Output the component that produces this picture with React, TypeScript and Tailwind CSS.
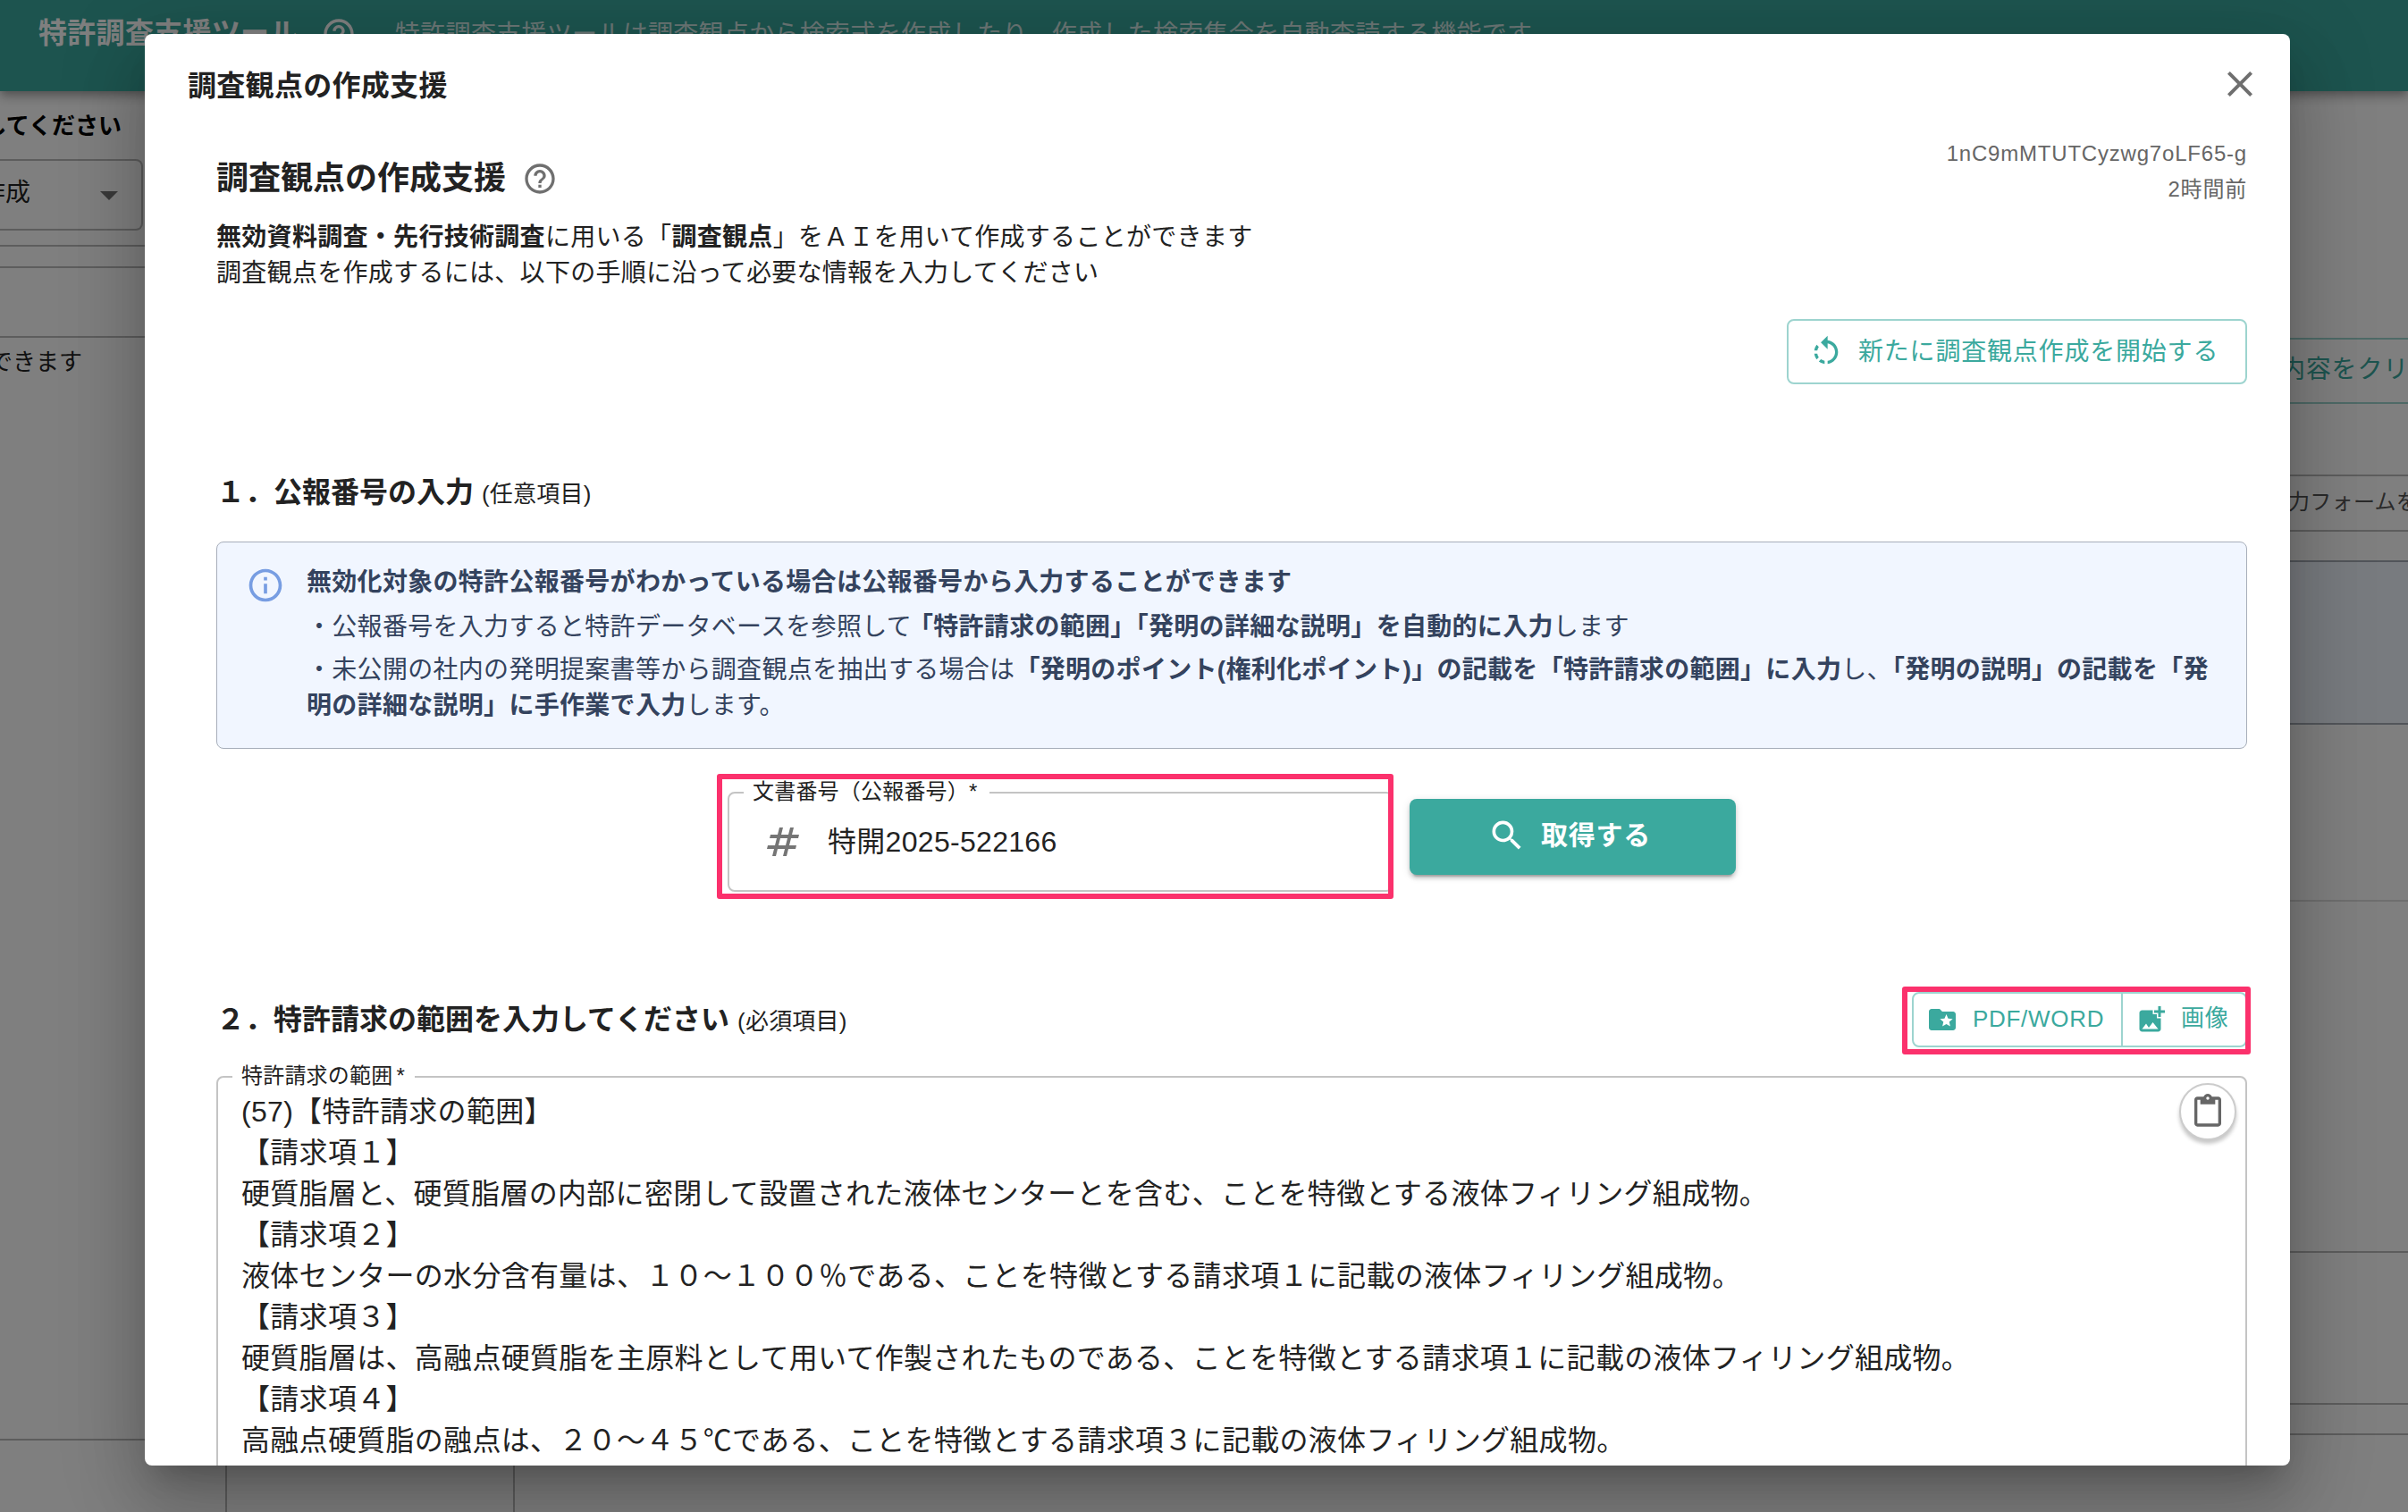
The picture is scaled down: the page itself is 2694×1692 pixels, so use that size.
import {
  MdAddPhotoAlternate,
  MdArrowDropDown,
  MdClose,
  MdContentPaste,
  MdFolderSpecial,
  MdHelpOutline,
  MdInfoOutline,
  MdNumbers,
  MdRotateLeft,
  MdSearch,
} from "react-icons/md";

const claims = [
  "(57)【特許請求の範囲】",
  "【請求項１】",
  "硬質脂層と、硬質脂層の内部に密閉して設置された液体センターとを含む、ことを特徴とする液体フィリング組成物。",
  "【請求項２】",
  "液体センターの水分含有量は、１０～１００％である、ことを特徴とする請求項１に記載の液体フィリング組成物。",
  "【請求項３】",
  "硬質脂層は、高融点硬質脂を主原料として用いて作製されたものである、ことを特徴とする請求項１に記載の液体フィリング組成物。",
  "【請求項４】",
  "高融点硬質脂の融点は、２０～４５℃である、ことを特徴とする請求項３に記載の液体フィリング組成物。",
];

function SearchPage() {
  return (
    <div className="flex h-full flex-col bg-white text-[#222]">
      <header className="z-10 flex h-[102px] shrink-0 items-start bg-[#3ba99e] pl-[43px] pt-[14px] text-white shadow-[0_4px_8px_-2px_rgba(0,0,0,0.2),0_8px_10px_rgba(0,0,0,0.14),0_2px_20px_rgba(0,0,0,0.12)]">
        <h1 className="w-[316px] text-[32px] font-bold leading-[46px] tracking-[0.3px]">特許調査支援ツール</h1>
        <MdHelpOutline className="mt-[4px] h-[40px] w-[40px]" />
        <p className="ml-[43px] text-[28px] leading-[50px] tracking-[0.3px] opacity-80">
          特許調査支援ツールは調査観点から検索式を作成したり、作成した検索集合を自動査読する機能です
        </p>
      </header>
      <div className="flex flex-1 justify-between">
        <aside className="flex w-[576px] flex-col">
          <div className="flex h-[76px] w-[136px] justify-end overflow-hidden whitespace-nowrap pt-[19px] text-[26px] font-bold leading-[40px] text-black">
            選択してください
          </div>
          <div className="flex h-[80px] w-[160px] items-center justify-between rounded-r-lg border-2 border-l-0 border-[#bbb] pr-[12px]">
            <span className="flex w-[34px] justify-end overflow-hidden whitespace-nowrap pb-[4px] text-[28px]">作成</span>
            <MdArrowDropDown className="h-[48px] w-[48px] text-[#757575]" />
          </div>
          <div className="mt-[16px] h-[26px] border-y-2 border-[#bbb]" />
          <div className="h-[78px] border-b-2 border-[#bbb]" />
          <div className="flex h-[1234px] w-full overflow-hidden border-b-2 border-[#bbb] pt-[7px]">
            <span className="flex h-[40px] w-[92px] justify-end whitespace-nowrap text-[26px] leading-[40px]">できます</span>
          </div>
          <div className="flex flex-1">
            <div className="w-[254px] border-r-2 border-[#bbb]" />
            <div className="flex-1 border-r-2 border-[#bbb]" />
          </div>
        </aside>
        <section className="flex w-[160px] flex-col overflow-hidden whitespace-nowrap pt-[276px]">
          <div className="flex h-[74px] items-center border-y-2 border-[#9dd4cf] pb-[2px] pl-[17px] text-[28px] tracking-[0.8px] text-[#3ba99e]">
            内容をクリックして
          </div>
          <div className="mt-[79px] flex h-[64px] items-center border-y-2 border-[#bbb] pb-[2px] pl-[26px] text-[24px] tracking-[0.3px] text-[#555]">
            力フォームを
          </div>
          <div className="mt-[32px] h-[184px] border-y-2 border-[#a5aab5] bg-[#f1f6ff]" />
          <div className="h-[198px] border-b-2 border-[#ddd]" />
          <div className="h-[393px] border-b-2 border-[#bbb]" />
          <div className="h-[170px] border-b-2 border-[#bbb]" />
          <div className="h-[34px] border-b-2 border-[#bbb]" />
        </section>
      </div>
    </div>
  );
}

function SectionTitle({ title, note }: { title: string; note: string }) {
  return (
    <h3 className="flex items-baseline text-[32px] font-bold leading-[48px]">
      {title}
      <span className="ml-[9px] text-[26px] font-normal tracking-[0.2px]">{note}</span>
    </h3>
  );
}

function PublicationInfo() {
  return (
    <div className="mt-[29px] flex h-[232px] rounded-lg border-[1.5px] border-[#a7aeba] bg-[#f1f6ff] pl-[32px] pr-[32px] pt-[25px] text-[28px] leading-[40px] tracking-[0.3px] text-[#34435e]">
      <MdInfoOutline className="mr-[24px] mt-[1px] h-[44px] w-[44px] shrink-0 text-[#779de2]" />
      <div>
        <p className="font-bold">無効化対象の特許公報番号がわかっている場合は公報番号から入力することができます</p>
        <p className="mt-[10px]">
          ・公報番号を入力すると特許データベースを参照して
          <b className="-ml-[4px]">「特許請求の範囲」「発明の詳細な説明」を自動的に入力</b>します
        </p>
        <p className="mt-[8px]">
          ・未公開の社内の発明提案書等から調査観点を抽出する場合は
          <b>「発明のポイント(権利化ポイント)」の記載を「特許請求の範囲」に入力</b>し、
          <b>「発明の説明」の記載を「発明の詳細な説明」に手作業で入力</b>します。
        </p>
      </div>
    </div>
  );
}

function NumberForm() {
  return (
    <div className="mt-[28px] flex h-[140px] pl-[560px]">
      {/* highlight frame around the field */}
      <div className="relative w-[757px]">
        <fieldset className="ml-[12px] mt-[3px] h-[129px] rounded-lg border-2 border-[#c4c4c4] pl-[16px]">
          <legend className="pb-[2px] pl-[10px] pr-[13px] text-[24px] leading-[34px] tracking-[0.2px]">
            文書番号（公報番号）*
          </legend>
          <div className="flex h-[74px] items-center pl-[20px] text-[32px] tracking-[0.3px]">
            <MdNumbers className="mr-[26px] h-[48px] w-[48px] text-[#757575]" />
            特開2025-522166
          </div>
        </fieldset>
        <div className="absolute inset-0 rounded-[3px] border-[6px] border-[#fb316c]" />
      </div>
      <button className="ml-[18px] mt-[28px] flex h-[85px] w-[365px] items-center justify-center rounded-lg bg-[#3ba99e] pb-[4px] pr-[8px] text-[30px] font-bold tracking-[0.8px] text-white shadow-[0_6px_2px_-4px_rgba(0,0,0,0.2),0_4px_4px_rgba(0,0,0,0.14),0_2px_10px_rgba(0,0,0,0.12)]">
        <MdSearch className="mr-[16px] h-[44px] w-[44px]" />
        取得する
      </button>
    </div>
  );
}

function UploadButtons() {
  return (
    <div className="relative mr-[-4px] h-[76px] w-[390px] pl-[11px] pt-[6px]">
      <div className="flex h-[62px] w-[375px] rounded-lg border-2 border-[#9dd4cf] text-[26px] tracking-[0.7px] text-[#3ba99e]">
        <button className="flex w-[234px] items-center border-r-2 border-[#9dd4cf] pl-[14px]">
          <MdFolderSpecial className="mr-[16px] h-[36px] w-[36px]" />
          <span className="pb-[2px]">PDF/WORD</span>
        </button>
        <button className="flex flex-1 items-center pl-[14px]">
          <MdAddPhotoAlternate className="mr-[15px] h-[36px] w-[36px]" />
          <span className="pb-[4px]">画像</span>
        </button>
      </div>
      <div className="absolute inset-0 rounded-[3px] border-[6px] border-[#fb316c]" />
    </div>
  );
}

function ClaimsField() {
  return (
    <div className="relative mt-[7px]">
      <fieldset className="h-[600px] rounded-lg border-2 border-[#c4c4c4] pl-[16px]">
        <legend className="pb-[2px] pl-[10px] pr-[11px] text-[24px] leading-[34px] tracking-[0.2px]">
          特許請求の範囲<span className="ml-[4px]">*</span>
        </legend>
        <div className="mt-[-2px] pl-[10px] text-[32px] leading-[46px] tracking-[0.3px]">
          {claims.map((line) => (
            <p key={line} className="whitespace-nowrap">
              {line}
            </p>
          ))}
        </div>
      </fieldset>
      <button className="absolute right-[12px] top-[25px] flex h-[64px] w-[64px] items-center justify-center rounded-full border-2 border-[#ccc] bg-white shadow-[0_4px_4px_rgba(0,0,0,0.22)]">
        <MdContentPaste className="h-[40px] w-[40px] text-[#666]" />
      </button>
    </div>
  );
}

function SupportDialog() {
  return (
    <div className="h-[1602px] w-[2400px] overflow-hidden rounded-lg bg-white text-[#222] shadow-[0_22px_30px_-14px_rgba(0,0,0,0.2),0_48px_76px_6px_rgba(0,0,0,0.14),0_18px_92px_16px_rgba(0,0,0,0.12)]">
      <div className="flex h-[112px] items-center justify-between pl-[48px] pr-[32px]">
        <h2 className="pt-[4px] text-[32px] font-bold tracking-[0.3px]">調査観点の作成支援</h2>
        <MdClose className="h-[48px] w-[48px] text-[#6f6f6f]" />
      </div>
      <div className="px-[80px] pr-[48px]">
        <div className="flex h-[207px] justify-between">
          <div>
            <div className="flex h-[99px] items-center">
              <h2 className="text-[36px] font-bold">調査観点の作成支援</h2>
              <MdHelpOutline className="ml-[18px] h-[40px] w-[40px] text-[#6f6f6f]" />
            </div>
            <p className="mt-[-3px] text-[28px] leading-[40px] tracking-[0.3px]">
              <b>無効資料調査・先行技術調査</b>に用いる「<b>調査観点</b>」をＡＩを用いて作成することができます
              <br />
              調査観点を作成するには、以下の手順に沿って必要な情報を入力してください
            </p>
          </div>
          <div className="pt-[2px] text-right text-[24px] leading-[40px] tracking-[0.8px] text-[#666]">
            <p>1nC9mMTUTCyzwg7oLF65-g</p>
            <p>2時間前</p>
          </div>
        </div>
        <div className="flex justify-end">
          <button className="flex h-[73px] w-[515px] items-center rounded-lg border-2 border-[#9dd4cf] pl-[22px] text-[28px] tracking-[0.8px] text-[#3ba99e]">
            <MdRotateLeft className="mr-[16px] h-[40px] w-[40px]" />
            新たに調査観点作成を開始する
          </button>
        </div>
        <div className="mt-[97px]">
          <SectionTitle title="１．公報番号の入力" note="(任意項目)" />
        </div>
        <PublicationInfo />
        <NumberForm />
        <div className="mt-[98px] flex items-center justify-between">
          <SectionTitle title="２．特許請求の範囲を入力してください" note="(必須項目)" />
          <UploadButtons />
        </div>
        <ClaimsField />
      </div>
    </div>
  );
}

export default function App() {
  return (
    <div
      lang="ja"
      className="relative h-[1692px] w-[2694px] overflow-hidden font-['Liberation_Sans','Noto_Sans_CJK_JP',sans-serif]"
    >
      <SearchPage />
      <div className="absolute inset-0 z-20 bg-black/50 pl-[162px] pt-[38px]">
        <SupportDialog />
      </div>
    </div>
  );
}
